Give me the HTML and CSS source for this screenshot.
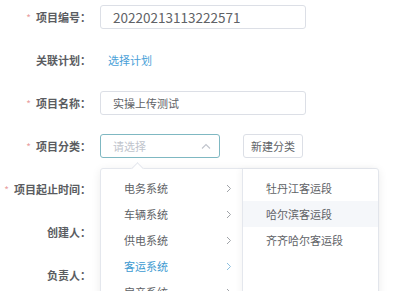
FILE: index.html
```html
<!DOCTYPE html>
<html lang="zh-CN">
<head>
    <meta charset="UTF-8">
    <meta name="viewport" content="width=device-width, initial-scale=1.0">
    <title>项目信息</title>
    <link rel="stylesheet" href="styles.css">
</head>
<body>
    <div class="form">
        <div class="row">
            <label class="label"><span class="star">*</span>项目编号：</label>
            <div class="input num">20220213113222571</div>
        </div>
        <div class="row">
            <label class="label">关联计划：</label>
            <a class="link">选择计划</a>
        </div>
        <div class="row">
            <label class="label"><span class="star">*</span>项目名称：</label>
            <div class="input">实操上传测试</div>
        </div>
        <div class="row">
            <label class="label"><span class="star">*</span>项目分类：</label>
            <div class="select-wrap">
                <div class="input select focus">
                    <span class="placeholder">请选择</span>
                    <svg class="caret" width="10" height="6" viewBox="0 0 10 6"><path d="M1 5.5 L5 1.5 L9 5.5" fill="none" stroke="#c0c4cc" stroke-width="1.1"/></svg>
                </div>
                <div class="cascader">
                    <div class="pointer"></div>
                    <ul class="menu">
                        <li>电务系统<svg class="arrow" width="6" height="9" viewBox="0 0 6 9"><path d="M1 1 L4.5 4.5 L1 8" fill="none" stroke="#a0a3a8" stroke-width="1"/></svg></li>
                        <li>车辆系统<svg class="arrow" width="6" height="9" viewBox="0 0 6 9"><path d="M1 1 L4.5 4.5 L1 8" fill="none" stroke="#a0a3a8" stroke-width="1"/></svg></li>
                        <li>供电系统<svg class="arrow" width="6" height="9" viewBox="0 0 6 9"><path d="M1 1 L4.5 4.5 L1 8" fill="none" stroke="#a0a3a8" stroke-width="1"/></svg></li>
                        <li class="active">客运系统<svg class="arrow" width="6" height="9" viewBox="0 0 6 9"><path d="M1 1 L4.5 4.5 L1 8" fill="none" stroke="#8cc0e0" stroke-width="1"/></svg></li>
                        <li>房产系统<svg class="arrow" width="6" height="9" viewBox="0 0 6 9"><path d="M1 1 L4.5 4.5 L1 8" fill="none" stroke="#a0a3a8" stroke-width="1"/></svg></li>
                    </ul>
                    <ul class="menu sub">
                        <li>牡丹江客运段</li>
                        <li class="hover">哈尔滨客运段</li>
                        <li>齐齐哈尔客运段</li>
                    </ul>
                </div>
            </div>
            <button class="btn">新建分类</button>
        </div>
        <div class="row">
            <label class="label"><span class="star">*</span>项目起止时间：</label>
        </div>
        <div class="row">
            <label class="label">创建人：</label>
        </div>
        <div class="row">
            <label class="label">负责人：</label>
        </div>
    </div>
</body>
</html>
```

FILE: styles.css
```css
body {
    margin: 0;
    padding: 0;
    background: #fff;
    font-family: "Noto Sans CJK SC", "Noto Sans", sans-serif;
    font-size: 11px;
    color: #606266;
    overflow: hidden;
}

.form {
    padding-top: 5px;
}

.row {
    display: flex;
    align-items: center;
    height: 24px;
    margin-bottom: 19px;
}

.label {
    width: 91px;
    margin-right: 9px;
    text-align: right;
    font-weight: bold;
    color: #5a5c61;
    white-space: nowrap;
}

.star {
    color: #e9a0a0;
    font-weight: normal;
    font-size: 10px;
    margin-right: 5px;
}

.input {
    box-sizing: border-box;
    width: 206px;
    height: 24px;
    border: 1px solid #dcdfe6;
    border-radius: 3px;
    padding-left: 12px;
    line-height: 22px;
    color: #606266;
}

.num {
    font-size: 13.5px;
}

.link {
    color: #4a9fd8;
    margin-left: 8px;
}

.select-wrap {
    position: relative;
}

.select {
    width: 120px;
    display: flex;
    align-items: center;
    justify-content: space-between;
    padding-right: 8px;
}

.focus {
    border-color: #7fb8c2;
}

.placeholder {
    color: #c0c4cc;
}

.btn {
    box-sizing: border-box;
    margin-left: 23px;
    width: 60px;
    height: 24px;
    border: 1px solid #dcdfe6;
    border-radius: 3px;
    background: #fff;
    font-family: inherit;
    font-size: 11px;
    color: #606266;
    padding: 0;
}

.cascader {
    position: absolute;
    top: 34px;
    left: 0;
    display: flex;
    background: #fff;
    border: 1px solid #e4e7ed;
    border-radius: 3px;
    box-shadow: 0 2px 10px rgba(0, 0, 0, 0.08);
    z-index: 2;
}

.pointer {
    position: absolute;
    top: -5px;
    left: 32px;
    width: 8px;
    height: 8px;
    background: #fff;
    border-left: 1px solid #e4e7ed;
    border-top: 1px solid #e4e7ed;
    transform: rotate(45deg);
}

.menu {
    list-style: none;
    margin: 0;
    padding: 6px 0;
    width: 141px;
    height: 150px;
}

.menu li {
    position: relative;
    height: 26px;
    line-height: 26px;
    padding-left: 23px;
    font-size: 11px;
    color: #606266;
}

.menu .active {
    color: #3d9ad1;
}

.arrow {
    position: absolute;
    right: 10px;
    top: 9px;
}

.sub {
    width: 135px;
    border-left: 1px solid #e4e7ed;
    box-shadow: -2px 0 6px rgba(0, 0, 0, 0.04);
}

.menu .hover {
    background: #f5f7fa;
}
```
